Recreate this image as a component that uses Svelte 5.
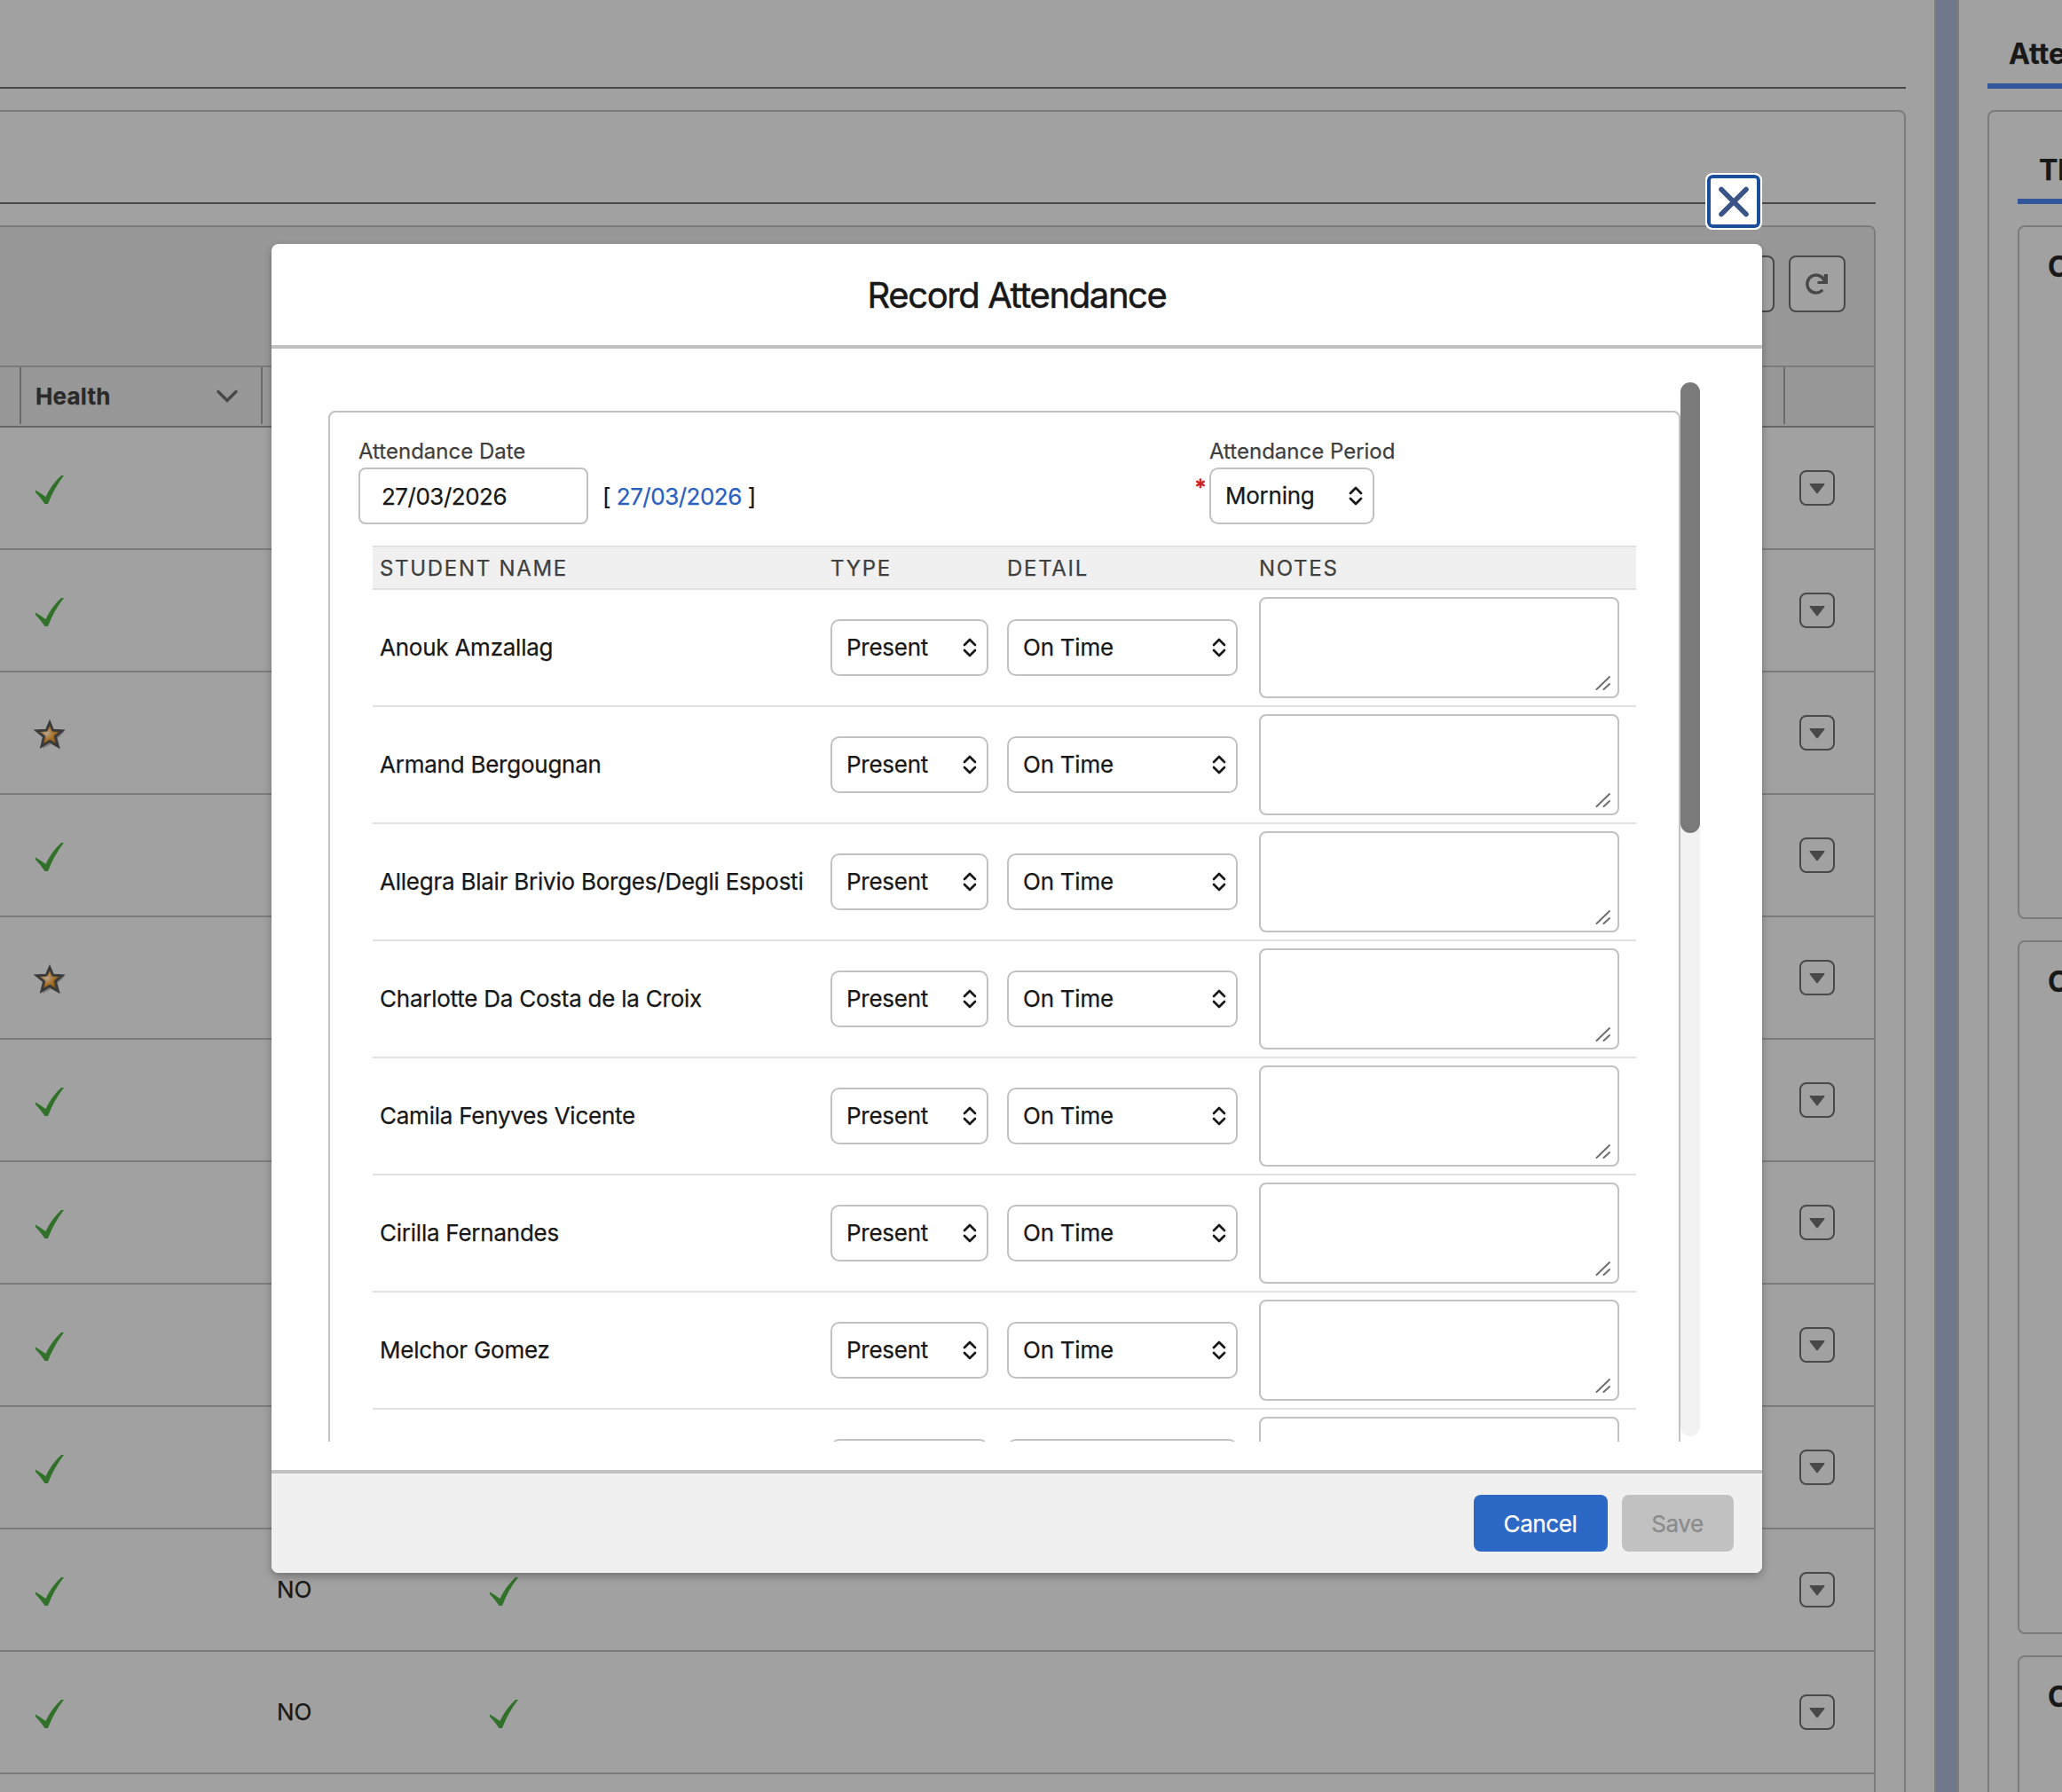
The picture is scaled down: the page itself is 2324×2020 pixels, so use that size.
<script>
  const rows = [
    { health: 'check' },
    { health: 'check' },
    { health: 'star' },
    { health: 'check' },
    { health: 'star' },
    { health: 'check' },
    { health: 'check' },
    { health: 'check' },
    { health: 'check' },
    { health: 'check', flag: 'NO', status: 'check' },
    { health: 'check', flag: 'NO', status: 'check' }
  ];

  const students = [
    'Anouk Amzallag',
    'Armand Bergougnan',
    'Allegra Blair Brivio Borges/Degli Esposti',
    'Charlotte Da Costa de la Croix',
    'Camila Fenyves Vicente',
    'Cirilla Fernandes',
    'Melchor Gomez',
    ''
  ];
</script>

{#snippet icon(name)}
  {#if name === 'check'}
    <svg class="mark" viewBox="0 0 32 32">
      <path d="M0 16.500 Q6 20 11.500 24 Q18 10 29 0 L32 0 Q21 14 14 32 L10.500 32 Q6 25 0 19 Z" fill="#32712a" />
    </svg>
  {:else}
    <svg class="mark" viewBox="0 0 32 32">
      <defs>
        <radialGradient id="gold" cx="40%" cy="45%" r="55%">
          <stop offset="0" stop-color="#b7a58c" />
          <stop offset="0.45" stop-color="#a8742f" />
          <stop offset="1" stop-color="#85500f" />
        </radialGradient>
      </defs>
      <path d="M17 2.500 L21 12 L33 12.500 L25 20.500 L28 32 L17.500 27 L8 32 L10 21 L2 13 L13 12 Z" fill="#555" opacity="0.45" />
      <path d="M16 2.500 L19.700 11.200 L30 11.800 L22.300 18.300 L25.300 29 L16 23.400 L7 29 L9.600 18.300 L1.500 11.800 L12.300 11.200 Z" fill="url(#gold)" stroke="#3a3a3a" stroke-width="2.900" />
    </svg>
  {/if}
{/snippet}

{#snippet select(label, kind)}
  <div class="select {kind}">
    <span>{label}</span>
    <svg class="updown" viewBox="0 0 16 22">
      <path d="M2 8 L8 2 L14 8 M2 14 L8 20 L14 14" fill="none" stroke="#181818" stroke-width="2.700" stroke-linecap="round" stroke-linejoin="round" />
    </svg>
  </div>
{/snippet}

<div class="page">
  <main class="panel">
    <div class="tabs"></div>
    <section class="outer">
      <div class="tabs inner"></div>
      <div class="list">
        <div class="toolbar">
          <div class="tool"></div>
          <div class="tool">
            <svg width="26" height="26" viewBox="0 0 26 26">
              <path d="M18.200 20.800 A10 10 0 1 1 21 9" fill="none" stroke="#484848" stroke-width="3.400" stroke-linecap="round" />
              <path d="M21 2 H25 V13 H13.500 V10 H19.500 Z" fill="#484848" />
            </svg>
          </div>
        </div>
        <div class="thead">
          <div class="th lead"></div>
          <div class="th health">
            <b>Health</b>
            <svg width="24" height="16" viewBox="0 0 24 16">
              <path d="M2 2.500 L12 12.500 L22 2.500" fill="none" stroke="#484848" stroke-width="3.400" stroke-linecap="round" />
            </svg>
          </div>
          <div class="th rest"></div>
          <div class="th"></div>
        </div>
        {#each rows as row}
          <div class="tr">
            <div class="td first">{@render icon(row.health)}</div>
            <div class="td flag">{row.flag ?? ''}</div>
            <div class="td">{#if row.status}{@render icon(row.status)}{/if}</div>
            <div class="menu">
              <svg width="18" height="12" viewBox="0 0 18 12"><path d="M0.500 1 Q0 0 1 0 H17 Q18 0 17.500 1 L9.700 11 Q9 11.800 8.300 11 Z" fill="#484848" /></svg>
            </div>
          </div>
        {/each}
        <div class="tr"></div>
      </div>
    </section>
  </main>
  <div class="splitter"></div>
  <aside class="side">
    <h2>Attendance</h2>
    <section class="sidebox">
      <h2 class="sub">This Week</h2>
      <div class="card">Current</div>
      <div class="card">Current</div>
      <div class="card">Current</div>
    </section>
  </aside>
</div>

<button class="close" aria-label="Close">
  <svg width="36" height="36" viewBox="0 0 36 36"><path d="M4 4.500 L32 32.500 M32 4.500 L4 32.500" stroke="#3a5488" stroke-width="5.600" stroke-linecap="round" /></svg>
</button>

<div class="modal">
  <header>Record Attendance</header>
  <div class="body">
    <div class="scroll">
      <div class="form">
        <div class="fields">
          <div class="field">
            <span class="label">Attendance Date</span>
            <div class="line">
              <div class="input">27/03/2026</div>
              <span class="today">[ <a href="#today">27/03/2026</a> ]</span>
            </div>
          </div>
          <div class="field period">
            <span class="label">Attendance Period</span>
            {@render select('Morning', 'morning')}
            <i class="req">*</i>
          </div>
        </div>
        <div class="grid">
          <div class="row head">
            <span>STUDENT NAME</span><span>TYPE</span><span>DETAIL</span><span>NOTES</span>
          </div>
          {#each students as name}
            <div class="row">
              <span class="name">{name}</span>
              {@render select(name ? 'Present' : '', 'present')}
              {@render select(name ? 'On Time' : '', 'ontime')}
              <div class="notes">
                <svg width="18" height="18" viewBox="0 0 18 18"><path d="M1.500 16 L16 2 M9.500 16 L16 10" stroke="#6f6f6f" stroke-width="2" stroke-linecap="round" /></svg>
              </div>
            </div>
          {/each}
        </div>
      </div>
      <div class="track"><div class="thumb"></div></div>
    </div>
  </div>
  <footer>
    <button class="btn primary">Cancel</button>
    <button class="btn disabled">Save</button>
  </footer>
</div>

<style>
  :global(body) {
    margin: 0;
    background: #a1a1a1;
    overflow: hidden;
  }
  :global(#app) {
    position: relative;
    width: 2324px;
    height: 2020px;
    overflow: hidden;
    font-family: Inter, "Liberation Sans", sans-serif;
    font-size: 26px;
    color: #181818;
    -webkit-text-stroke: 0.25px currentColor;
  }
  :global(#app *) {
    box-sizing: border-box;
  }
  svg {
    display: block;
    flex: none;
  }
  .page {
    display: flex;
    height: 2020px;
    overflow: hidden;
    background: #a1a1a1;
  }
  .panel {
    width: 2180px;
    flex: none;
    padding-right: 32px;
  }
  .tabs {
    height: 100px;
    border-bottom: 2px solid #484848;
    margin-bottom: 24px;
  }
  .outer {
    border: 2px solid #7c7c7c;
    border-left: 0;
    border-radius: 0 8px 0 0;
    padding-right: 32px;
    height: 2000px;
  }
  .tabs.inner {
    height: 104px;
  }
  .list {
    border: 2px solid #7c7c7c;
    border-left: 0;
    border-radius: 0 8px 0 0;
    overflow: hidden;
  }
  .toolbar {
    height: 156px;
    background: #989898;
    display: flex;
    justify-content: flex-end;
    gap: 16px;
    padding: 32px 32px 0 0;
  }
  .tool {
    width: 64px;
    height: 64px;
    border: 2px solid #484848;
    border-radius: 8px;
    background: #a1a1a1;
    display: flex;
    align-items: center;
    justify-content: center;
  }
  .thead {
    height: 70px;
    border-top: 2px solid #7c7c7c;
    border-bottom: 2px solid #666;
    background: #989898;
    display: flex;
  }
  .th {
    height: 64px;
    border-right: 2px solid #6a6a6a;
    width: 24px;
    flex: none;
  }
  .th:last-child {
    border: 0;
    flex: 1;
  }
  .th.health {
    width: 272px;
    display: flex;
    align-items: center;
    justify-content: space-between;
    padding: 1px 26px 0 16px;
    color: #2a2a2a;
  }
  .th.health b {
    letter-spacing: 0.2px;
  }
  .th.rest {
    width: 1716px;
  }
  .tr {
    height: 138px;
    border-bottom: 2px solid #7c7c7c;
    display: flex;
    padding: 48px 44px 0 40px;
  }
  .td {
    flex: 1;
    padding-top: 6px;
  }
  .td.first {
    flex: none;
    width: 272px;
  }
  .td.flag {
    flex: none;
    width: 240px;
    line-height: 32px;
    padding-top: 4px;
  }
  .mark {
    width: 32px;
    height: 32px;
    overflow: visible;
  }
  .menu {
    width: 40px;
    height: 40px;
    border: 2px solid #484848;
    border-radius: 8px;
    display: flex;
    align-items: center;
    justify-content: center;
    padding-top: 2px;
  }
  .splitter {
    width: 28px;
    flex: none;
    background: #70798b;
    border: solid #7f7d7a;
    border-width: 0 2px;
  }
  .side {
    width: 800px;
    flex: none;
    padding-left: 32px;
  }
  h2 {
    margin: 0;
    height: 100px;
    border-bottom: 6px solid #34569a;
    font-size: 32px;
    font-weight: 700;
    line-height: 40px;
    padding: 41px 0 0 24px;
  }
  .sidebox {
    margin-top: 24px;
    height: 2000px;
    border: 2px solid #7c7c7c;
    border-radius: 8px 0 0 0;
    padding-left: 32px;
  }
  h2.sub {
    height: 104px;
    padding-top: 46px;
  }
  .card {
    margin-top: 24px;
    height: 782px;
    border: 2px solid #7c7c7c;
    border-radius: 8px;
    font-size: 32px;
    font-weight: 700;
    line-height: 40px;
    padding: 25px 0 0 32px;
  }
  .close {
    position: absolute;
    left: 1922px;
    top: 195px;
    width: 64px;
    height: 64px;
    padding: 0;
    border: 2px solid #fff;
    border-radius: 8px;
    background: #fff;
    box-shadow: inset 0 0 0 4px #1b4f9c;
    display: flex;
    align-items: center;
    justify-content: center;
  }
  .modal {
    position: absolute;
    left: 306px;
    top: 275px;
    width: 1680px;
    height: 1498px;
    display: flex;
    flex-direction: column;
    background: #fff;
    border-radius: 8px;
    box-shadow: 0 4px 10px rgba(0, 0, 0, 0.28);
  }
  header {
    height: 118px;
    border-bottom: 4px solid #c1c1c1;
    text-align: center;
    font-size: 40px;
    line-height: 114px;
    padding-top: 1px;
    letter-spacing: -1.4px;
    -webkit-text-stroke: 0.5px currentColor;
  }
  .body {
    flex: 1;
    padding: 32px 70px 32px 64px;
  }
  .scroll {
    height: 1200px;
    overflow: hidden;
    display: flex;
    padding-top: 6px;
  }
  .form {
    margin-top: 32px;
    width: 1524px;
    flex: none;
    height: 1300px;
    border: 2px solid #c1c1c1;
    border-radius: 8px;
    padding: 28px 32px 0;
  }
  .track {
    width: 22px;
    height: 1188px;
    flex: none;
    border-radius: 11px;
    background: #f2f2f2;
  }
  .thumb {
    height: 508px;
    border-radius: 11px;
    background: #7a7a7a;
  }
  .fields {
    display: grid;
    grid-template-columns: 959px 1fr;
    height: 122px;
  }
  .label {
    display: block;
    font-size: 24px;
    line-height: 32px;
    height: 34px;
    color: #3f3f3f;
    white-space: nowrap;
  }
  .line {
    display: flex;
    align-items: center;
    gap: 16px;
  }
  .input {
    width: 259px;
    height: 64px;
    border: 2px solid #c1c1c1;
    border-radius: 8px;
    line-height: 62px;
    padding-left: 24px;
    letter-spacing: -0.5px;
  }
  .today {
    letter-spacing: -0.5px;
    padding-top: 1px;
  }
  .today a {
    color: #2a5fc0;
    text-decoration: none;
  }
  .period {
    position: relative;
  }
  .req {
    position: absolute;
    left: -16px;
    top: 41px;
    font-style: normal;
    font-size: 24px;
    line-height: 32px;
    color: #d0201c;
    -webkit-text-stroke: 0.8px currentColor;
  }
  .select {
    height: 64px;
    border: 2px solid #c1c1c1;
    border-radius: 10px;
    display: flex;
    align-items: center;
    justify-content: space-between;
    padding: 0 11px 1px 16px;
    letter-spacing: -0.25px;
  }
  .updown {
    width: 16px;
    height: 22px;
  }
  .morning {
    width: 186px;
  }
  .present {
    width: 178px;
  }
  .ontime {
    width: 260px;
  }
  .grid {
    margin: 0 16px 0 16px;
  }
  .row {
    height: 132px;
    border-bottom: 2px solid #e0e0e0;
    display: grid;
    grid-template-columns: 508px 199px 284px 406px;
    align-items: center;
    padding-left: 8px;
    white-space: nowrap;
  }
  .row.head {
    height: 50px;
    border-top: 2px solid #e0e0e0;
    background: #f0f0f0;
    font-size: 24px;
    letter-spacing: 1.7px;
    color: #3f3f3f;
  }
  .name {
    letter-spacing: -0.24px;
    padding-bottom: 1px;
  }
  .notes {
    height: 114px;
    border: 2px solid #c1c1c1;
    border-radius: 8px;
    display: flex;
    align-items: flex-end;
    justify-content: flex-end;
    padding: 0 7px 6px 0;
  }
  footer {
    height: 116px;
    border-top: 4px solid #c1c1c1;
    background: #f0f0f0;
    border-radius: 0 0 8px 8px;
    display: flex;
    justify-content: flex-end;
    gap: 16px;
    padding: 24px 32px;
  }
  .btn {
    height: 64px;
    border: 0;
    border-radius: 8px;
    padding: 0 1px 0 0;
    font: 26px Inter, "Liberation Sans", sans-serif;
    letter-spacing: -0.4px;
  }
  .primary {
    width: 151px;
    background: #2c69c6;
    color: #fff;
  }
  .disabled {
    width: 126px;
    background: #c1c1c1;
    color: #8b8b8b;
  }
</style>
